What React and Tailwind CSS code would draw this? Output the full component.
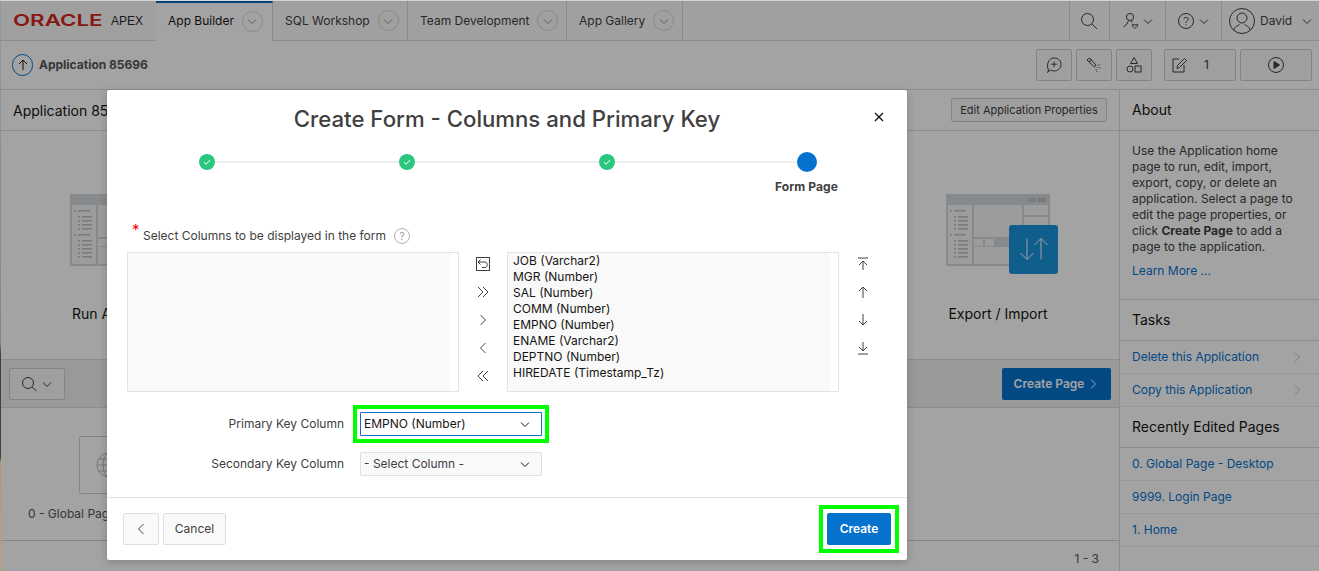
import React from "react";

const S = ({ s = 16, className = "", children, vb }) => (
  <svg width={s} height={s} viewBox={vb || `0 0 ${s} ${s}`} fill="none" stroke="currentColor" strokeWidth="1" className={className}>
    {children}
  </svg>
);
const Chev = ({ className = "" }) => (
  <S s={12} className={className}><path d="M2 4.5 L6 8.5 L10 4.5" /></S>
);
const Tab = ({ label, w, active }) => (
  <div className={`flex items-center pl-3 gap-2 border-r border-[#d8d8d8] ${w} ${active ? "bg-white border-t-2 border-t-[#056ac8] h-[41px] self-start pb-[3px] text-[#161513]" : "h-full text-[#404040]"}`}>
    <span>{label}</span>
    <span className="w-[21px] h-[21px] rounded-full border border-[#d6d6d6] flex items-center justify-center text-[#8a8a8a]"><Chev /></span>
  </div>
);
const IconBtn = ({ w = "w-[36px]", className = "justify-center", children }) => (
  <div className={`h-[32px] ${w} ${className} border border-[#cfcfcf] rounded-[2px] bg-[#f9f9f9] flex items-center text-[#404040]`}>{children}</div>
);
const Row = ({ children, chev, className = "" }) => (
  <div className={`h-[33px] flex items-center justify-between pl-3 pr-[16px] border-b border-[#ececec] text-[#0572ce] ${className}`}>
    <span>{children}</span>
    {chev && <S s={12} className="text-[#c4c4c4]"><path d="M4 1.5 L8.5 6 L4 10.5" /></S>}
  </div>
);
const Side = ({ children }) => (
  <div className="h-[41px] flex items-center px-3 border-b border-[#dcdcdc] text-[14px] text-[#161513]">{children}</div>
);
const Illus = () => (
  <svg width="104" height="72" viewBox="0 0 104 72" fill="none">
    <rect x="0" y="0" width="104" height="72" fill="#d3d8dc" />
    <rect x="2" y="11" width="24" height="59" fill="#f5f5f5" />
    <rect x="28" y="11" width="48" height="32" fill="#f5f5f5" />
    <rect x="28" y="53" width="74" height="17" fill="#f5f5f5" />
    <rect x="78" y="11" width="24" height="10" fill="#f5f5f5" />
    <rect x="78" y="23" width="24" height="20" fill="#f5f5f5" />
    <rect x="28" y="45" width="9" height="7" fill="#f5f5f5" />
    <rect x="39" y="45" width="9" height="7" fill="#f5f5f5" />
    <rect x="82" y="4" width="8" height="4" fill="#bcc2c7" />
    <rect x="92" y="4" width="8" height="4" fill="#bcc2c7" />
    {[16, 40].map((y) => (
      <g key={y} fill="#bcc2c7"><rect x="4" y={y} width="2" height="1.6" /><rect x="8" y={y} width="12" height="1.6" /></g>
    ))}
    {[22, 26, 30, 34, 46, 50, 54, 58, 62].map((y) => (
      <g key={y} fill="#bcc2c7"><rect x="8" y={y} width="2" height="1.6" /><rect x="12" y={y} width="10" height="1.6" /></g>
    ))}
  </svg>
);
const lists = ["JOB (Varchar2)", "MGR (Number)", "SAL (Number)", "COMM (Number)", "EMPNO (Number)", "ENAME (Varchar2)", "DEPTNO (Number)", "HIREDATE (Timestamp_Tz)"];
const Step = () => (
  <div className="w-4 h-4 rounded-full bg-[#2bc77f] flex items-center justify-center text-white">
    <S s={12}><path d="M3 6.2 L5.2 8.2 L9.2 4" /></S>
  </div>
);

export default function App() {
  return (
    <div className="relative w-[1319px] h-[571px] overflow-hidden bg-white text-[12px] text-[#404040] flex flex-col" style={{ fontFamily: "Inter, 'Noto Sans', sans-serif" }}>
      <div className="h-[40px] mt-px shrink-0 flex items-center bg-[#fbfbfb] border-b border-[#dcdcdc]">
        <div className="w-[156px] pl-[13px] flex items-center shrink-0">
          <span className="text-[#d3261d] text-[16.5px] leading-none font-semibold origin-left scale-x-[1.35] w-[85px]">ORACLE</span>
          <span className="text-[12px] ml-[13px] text-[#2b2b2b]" style={{ fontFamily: "'Liberation Sans', sans-serif" }}>APEX</span>
        </div>
        <Tab label="App Builder" w="w-[117px]" active />
        <Tab label="SQL Workshop" w="w-[135px]" />
        <Tab label="Team Development" w="w-[159px]" />
        <Tab label="App Gallery" w="w-[116px]" />
        <div className="flex-1" />
        <div className="w-[40px] h-full border-l border-[#d8d8d8] flex items-center justify-center pr-[2px]">
          <S s={18}><circle cx="7.5" cy="7.5" r="6" /><path d="M12 12 L17 17" /></S>
        </div>
        <div className="w-[56px] h-full border-l border-[#d8d8d8] flex items-center justify-center gap-[2px]">
          <S s={18}><circle cx="8" cy="5" r="3.6" /><path d="M6.5 8.5 L5 12 L1.5 15 M9.5 8.5 L10 10.5" /><path d="M12 13 C11 11.5 9.5 12.5 10.5 14 L13 16.5 L15.5 14 C16.5 12.5 15 11.5 14 13 Z" /></S>
          <Chev />
        </div>
        <div className="w-[56px] h-full border-l border-[#d8d8d8] flex items-center justify-center gap-[3px]">
          <S s={18}><circle cx="9" cy="9" r="7.5" /><path d="M6.8 7 C7 4.8 11.2 4.8 11.2 7.2 C11.2 8.8 9 8.8 9 10.8 M9 12.3 V13.3" /></S>
          <Chev />
        </div>
        <div className="w-[98px] h-full border-l border-[#d8d8d8] flex items-center pl-[7px] gap-[5px]">
          <S s={26}><circle cx="13" cy="13" r="12.5" /><circle cx="13" cy="10" r="5" /><path d="M5 22 C5.5 18 9 18 10.5 16.5 M21 22 C20.5 18 17 18 15.5 16.5" /></S>
          <span>David</span>
          <Chev className="ml-[4px]" />
        </div>
      </div>
      <div className="h-[49px] shrink-0 flex items-center bg-white border-b border-[#dcdcdc]">
        <div className="ml-3 w-[21px] h-[22px] rounded-full border border-[#0572ce] flex items-center justify-center text-[#161513]">
          <S s={14}><path d="M7 12 V2 M3 6 L7 2 L11 6" /></S>
        </div>
        <span className="ml-[6px] font-bold text-[#555] text-[12px]">Application 85696</span>
        <div className="flex-1" />
        <div className="flex gap-[4px] mr-[7px]">
          <IconBtn><S s={18}><path d="M3.5 14 C1 9 3.5 2 9 2 C13.5 2 16 5 16 8.5 C16 12.5 12.5 15 9 15 C7.5 15 6.5 14.5 5.5 14 L2.5 16.5 Z" /><path d="M9 5.5 V11 M6.2 8.2 H11.8" /></S></IconBtn>
          <IconBtn><S s={18}><path d="M2 4 L4.5 2 L11 9 L9.5 11 Z M4 6 L7 3.5" /><path d="M12.5 9.5 L15 8.5 M12.5 11.5 L15.5 12 M11 13 L12 16" strokeDasharray="1 1" /></S></IconBtn>
          <IconBtn><S s={18}><path d="M9 1.5 L12.5 7.5 H5.5 Z" /><circle cx="5" cy="13" r="3" /><rect x="10" y="10" width="6" height="6" /></S></IconBtn>
          <div className="w-[4px]" />
          <IconBtn w="w-[72px]" className="justify-start pl-[5px]"><S s={18}><path d="M9.5 3 H3 V16 H14 V9" /><path d="M7 12.5 L7.5 9.5 L14.5 2.5 L16.5 4.5 L9.5 11.5 Z" /></S><span className="ml-[16px]">1</span></IconBtn>
          <IconBtn w="w-[72px]"><S s={18}><circle cx="9" cy="9" r="7.5" /><path d="M7 5.5 L12.5 9 L7 12.5 Z" fill="currentColor" /></S></IconBtn>
        </div>
      </div>
      <div className="flex flex-1 min-h-0">
        <div className="flex-1 min-w-0 flex flex-col border-r border-[#dcdcdc]">
          <div className="h-[41px] shrink-0 flex items-center justify-between pl-[13px] pr-3 border-b border-[#dcdcdc]">
            <span className="text-[14px] text-[#161513]">Application 85696</span>
            <div className="h-[24px] w-[156px] rounded-[2px] border border-[#cfcfcf] bg-[#f9f9f9] flex items-center justify-center text-[11px]">Edit Application Properties</div>
          </div>
          <div className="h-[228px] shrink-0 flex justify-between pl-[70px] pr-[61px] pt-[63px]">
            <div className="w-[112px] flex flex-col">
              <Illus />
              <div className="mt-[38px] ml-[2px] text-[14px] text-[#161513] leading-[20px]">Run Application</div>
            </div>
            <div className="w-[112px] relative flex flex-col">
              <Illus />
              <div className="absolute left-[63px] top-[31px] w-[49px] h-[49px] rounded-[3px] bg-[#1993dc] flex items-center justify-center text-white">
                <S s={30}><path d="M8 3.5 V24.5 M1.5 18 L8 24.5 L14.5 18 M22 24.5 V3.5 M15.5 10 L22 3.5 L28.5 10" /></S>
              </div>
              <div className="mt-[38px] text-[14px] text-[#161513] leading-[20px] w-[104px] text-center">Export / Import</div>
            </div>
          </div>
          <div className="h-[49px] shrink-0 flex items-center justify-between pl-[9px] pr-[8px] bg-[#f0f0f0] border-y border-[#dcdcdc]">
            <div className="h-[32px] w-[56px] border border-[#cfcfcf] rounded-[2px] bg-[#f9f9f9] flex items-center justify-center gap-[4px]">
              <S s={16}><circle cx="7" cy="7" r="5.5" /><path d="M11 11 L15.5 15" /></S>
              <Chev />
            </div>
            <div className="h-[32px] w-[109px] rounded-[2px] bg-[#0572ce] text-white font-semibold flex items-center justify-center gap-[3px]">
              Create Page
              <S s={12}><path d="M4 1.5 L8.5 6 L4 10.5" /></S>
            </div>
          </div>
          <div className="flex-1 min-h-0 flex flex-col">
            <div className="h-[133px] shrink-0 border-b border-[#d0d0d0] pt-[28px] pl-[28px]">
              <div className="ml-[51px] w-[60px] h-[58px] border border-[#cfcfcf] rounded-[2px] flex items-center justify-center text-[#b8b8b8]">
                <S s={28}><circle cx="14" cy="14" r="12" /><ellipse cx="14" cy="14" rx="6" ry="12" /><path d="M2 14 H26 M4 8 H24 M4 20 H24" /></S>
              </div>
              <div className="mt-[11px] text-[#555] whitespace-nowrap">0 - Global Page</div>
            </div>
            <div className="flex-1 flex items-center justify-end pr-[20px] pt-[6px] text-[#555]">1 - 3</div>
          </div>
        </div>
        <div className="w-[199px] shrink-0 flex flex-col leading-[16px]">
          <Side>About</Side>
          <div className="h-[169px] shrink-0 px-3 pt-[12px] border-b border-[#dcdcdc]">
            <p>Use the Application home page to run, edit, import, export, copy, or delete an application. Select a page to edit the page properties, or click <b>Create Page</b> to add a page to the application.</p>
            <p className="mt-2 text-[#0572ce]">Learn More ...</p>
          </div>
          <Side>Tasks</Side>
          <Row chev>Delete this Application</Row>
          <Row chev className="border-[#dcdcdc]">Copy this Application</Row>
          <Side>Recently Edited Pages</Side>
          <Row>0. Global Page - Desktop</Row>
          <Row>9999. Login Page</Row>
          <Row className="border-[#dcdcdc]">1. Home</Row>
        </div>
      </div>

      <div className="absolute inset-0 bg-black/36" />
      <div className="absolute left-0 top-0 w-px h-full bg-[linear-gradient(#8d98a8_0%,#7c8896_60%,#3f3f48_62%,#3f3f48_80%,#b4975c_81%,#c2a468_100%)]" />
      <div className="absolute left-0 top-0 w-full h-px bg-[#d4d4d4]" />

      <div className="absolute left-[107px] top-[90px] w-[800px] h-[470px] bg-white rounded-[2px] shadow-[0_2px_8px_rgba(0,0,0,0.2)] flex flex-col">
        <div className="h-[52px] shrink-0 relative flex items-start justify-center pt-[11px]">
          <span className="text-[22.2px] leading-[36px] font-medium text-[#404040]">Create Form - Columns and Primary Key</span>
          <S s={12} className="absolute left-[766px] top-[21px] text-[#161513]"><path d="M2 2 L10 10 M10 2 L2 10" strokeWidth="1.4" /></S>
        </div>
        <div className="h-[60px] shrink-0 relative">
          <div className="absolute left-[100px] top-[19px] w-[600px] h-[2px] bg-[#efefef]" />
          <div className="absolute left-[92px] top-[10px] flex gap-[184px] items-center">
            <Step /><Step /><Step />
            <div className="w-5 h-5 rounded-full bg-[#0572ce] -ml-[2px]" />
          </div>
          <div className="absolute left-[668px] top-[36px] font-bold text-[#404040] tracking-[0.1px]">Form Page</div>
        </div>
        <div className="h-[40px] shrink-0 relative pl-[36px] pt-[26px] flex items-start">
          <span className="absolute left-[25px] top-[20px] text-[#ff0000] text-[15px] leading-[16px]">*</span>
          <span className="leading-[16px]">Select Columns to be displayed in the form</span>
          <span className="ml-[8px] w-4 h-4 rounded-full border border-[#b0b0b0] text-[#9a9a9a] text-[10px] leading-[14px] text-center shrink-0">?</span>
        </div>
        <div className="mt-[10px] h-[140px] shrink-0 pl-[20px] flex">
          <div className="w-[332px] h-full border border-[#e3e3e3] bg-[#f9f9f9] pr-[8px] rounded-[1px] relative">
            <div className="absolute right-0 top-0 bottom-0 w-[8px] bg-white" />
          </div>
          <div className="w-[48px] h-full flex flex-col items-center pt-[4px] gap-[12px] text-[#404040]">
            <S s={16}><rect x="1.5" y="1.5" width="13" height="13" /><path d="M5.5 3.5 L3 6 L5.5 8.5 M3 6 H10 C13 6 13 11.5 10 11.5 H7" /></S>
            <S s={16}><path d="M3 3 L8 8 L3 13 M8 3 L13 8 L8 13" /></S>
            <S s={16}><path d="M5.5 3 L10.5 8 L5.5 13" /></S>
            <S s={16}><path d="M10.5 3 L5.5 8 L10.5 13" /></S>
            <S s={16}><path d="M8 3 L3 8 L8 13 M13 3 L8 8 L13 13" /></S>
          </div>
          <div className="w-[332px] h-full border border-[#e3e3e3] rounded-[1px] relative pl-[5px] text-[#161513] leading-[16px]">
            <div className="absolute left-0 right-[8px] top-0 bottom-0 bg-[#f9f9f9]" />
            <div className="relative">{lists.map((l) => <div key={l}>{l}</div>)}</div>
          </div>
          <div className="w-[48px] h-full flex flex-col items-center pt-[4px] gap-[12px] text-[#404040]">
            <S s={16}><path d="M3 2 H13 M8 14 V5 M4 9 L8 5 L12 9" /></S>
            <S s={16}><path d="M8 14 V3 M4 7 L8 3 L12 7" /></S>
            <S s={16}><path d="M8 2 V13 M4 9 L8 13 L12 9" /></S>
            <S s={16}><path d="M3 14 H13 M8 2 V11 M4 7 L8 11 L12 7" /></S>
          </div>
        </div>
        <div className="mt-[13px] h-[38px] shrink-0 flex items-center">
          <span className="w-[237px] text-right">Primary Key Column</span>
          <div className="ml-[9px] w-[196px] h-[38px] border-[4px] border-[#00ff00] p-[3px]">
            <div className="h-[24px] border border-[#0572ce] bg-white rounded-[1px] flex items-center justify-between pl-[3px] pr-[10px] text-[#161513]">
              EMPNO (Number)<Chev />
            </div>
          </div>
        </div>
        <div className="mt-[9px] h-[24px] shrink-0 flex items-center">
          <span className="w-[237px] text-right">Secondary Key Column</span>
          <div className="ml-[16px] w-[182px] h-[24px] border border-[#dfdfdf] bg-[#f9f9f9] rounded-[1px] flex items-center justify-between pl-[3px] pr-[10px]">
            - Select Column -<Chev className="text-[#161513]" />
          </div>
        </div>
        <div className="mt-[21px] flex-1 border-t border-[#e3e3e3] flex items-center justify-between pl-[16px] pr-[8px]">
          <div className="flex gap-[4px]">
            <div className="w-[36px] h-[32px] border border-[#dfdfdf] rounded-[2px] bg-[#f9f9f9] flex items-center justify-center">
              <S s={14}><path d="M9.5 2 L4.5 7 L9.5 12" /></S>
            </div>
            <div className="w-[63px] h-[32px] border border-[#dfdfdf] rounded-[2px] bg-[#f9f9f9] flex items-center justify-center">Cancel</div>
          </div>
          <div className="w-[80px] h-[48px] border-[4px] border-[#00ff00] p-[4px]">
            <div className="h-full rounded-[2px] bg-[#0572ce] text-white font-semibold flex items-center justify-center">Create</div>
          </div>
        </div>
      </div>
    </div>
  );
}
